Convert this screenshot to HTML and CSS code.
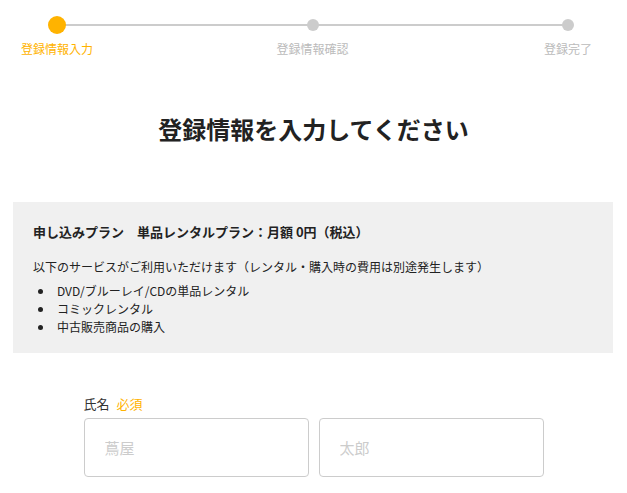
FILE: index.html
```html
<!DOCTYPE html>
<html lang="ja">
<head>
    <meta charset="utf-8">
    <title>会員登録</title>
    <meta name="viewport" content="width=device-width, initial-scale=1.0">
    <link rel="stylesheet" href="styles.css">
</head>
<body>
    <ol class="stepper">
        <li class="step current">
            <span class="step-dot"></span>
            <span class="step-label">登録情報入力</span>
        </li>
        <li class="step">
            <span class="step-dot"></span>
            <span class="step-label">登録情報確認</span>
        </li>
        <li class="step">
            <span class="step-dot"></span>
            <span class="step-label">登録完了</span>
        </li>
    </ol>

    <h1 class="page-title">登録情報を入力してください</h1>

    <div class="plan">
        <p class="plan-name">申し込みプラン　単品レンタルプラン：月額 0円（税込）</p>
        <p class="plan-note">以下のサービスがご利用いただけます（レンタル・購入時の費用は別途発生します）</p>
        <ul class="plan-list">
            <li>DVD/ブルーレイ/CDの単品レンタル</li>
            <li>コミックレンタル</li>
            <li>中古販売商品の購入</li>
        </ul>
    </div>

    <form class="form">
        <div class="field">
            <label class="field-label">氏名<span class="required">必須</span></label>
            <div class="field-row">
                <input class="input" type="text" placeholder="蔦屋">
                <input class="input" type="text" placeholder="太郎">
            </div>
        </div>
    </form>
</body>
</html>
```

FILE: styles.css
```css
body {
    margin: 0;
    background-color: #fff;
    color: #222;
    font-family: "Noto Sans CJK JP", "Noto Sans", sans-serif;
}
p {
    margin: 0;
}

/* steps */
.stepper {
    position: relative;
    display: flex;
    justify-content: space-between;
    margin: 0;
    padding: 16px 23px 0 21px;
    list-style: none;
}
.stepper::before {
    content: "";
    position: absolute;
    top: 24px;
    left: 57px;
    right: 59px;
    height: 2px;
    background: #ccc;
}
.step {
    position: relative;
    display: flex;
    flex-direction: column;
    align-items: center;
    width: 72px;
}
.step-dot {
    display: flex;
    align-items: center;
    justify-content: center;
    height: 18px;
}
.step-dot::after {
    content: "";
    width: 12px;
    height: 12px;
    border-radius: 50%;
    background: #ccc;
}
.current .step-dot::after {
    width: 18px;
    height: 18px;
    background: #ffb300;
}
.step-label {
    margin-top: 6px;
    font-size: 12px;
    line-height: 18px;
    color: #bbb;
    white-space: nowrap;
}
.current .step-label {
    color: #ffb300;
}

.page-title {
    margin: 53px 0 0;
    font-size: 24px;
    line-height: 36px;
    font-weight: bold;
    text-align: center;
}

/* plan box */
.plan {
    margin: 55px 14px 0 13px;
    padding: 20px 20px 17px;
    background: #f0f0f0;
}
.plan-name {
    font-size: 13px;
    line-height: 20px;
    font-weight: bold;
}
.plan-note {
    margin-top: 16px;
    font-size: 12px;
    line-height: 18px;
}
.plan-list {
    margin: 6px 0 0;
    padding-left: 24px;
    list-style: none;
    font-size: 12px;
    line-height: 18px;
}
.plan-list li {
    position: relative;
}
.plan-list li::before {
    content: "";
    position: absolute;
    top: 7px;
    left: -19px;
    width: 5px;
    height: 5px;
    border-radius: 50%;
    background: #222;
}

/* form */
.form {
    width: 460px;
    margin: 41px auto 0;
}
.field-label {
    display: block;
    font-size: 13px;
    line-height: 20px;
    color: #333;
}
.required {
    margin-left: 7px;
    color: #ffb300;
}
.field-row {
    display: flex;
    gap: 10px;
    margin-top: 4px;
}
.input {
    flex: 1;
    min-width: 0;
    height: 59px;
    box-sizing: border-box;
    padding: 0 20px;
    border: 1px solid #ccc;
    border-radius: 4px;
    font-family: inherit;
    font-size: 15px;
    color: #222;
}
.input::placeholder {
    color: #ccc;
}
```
